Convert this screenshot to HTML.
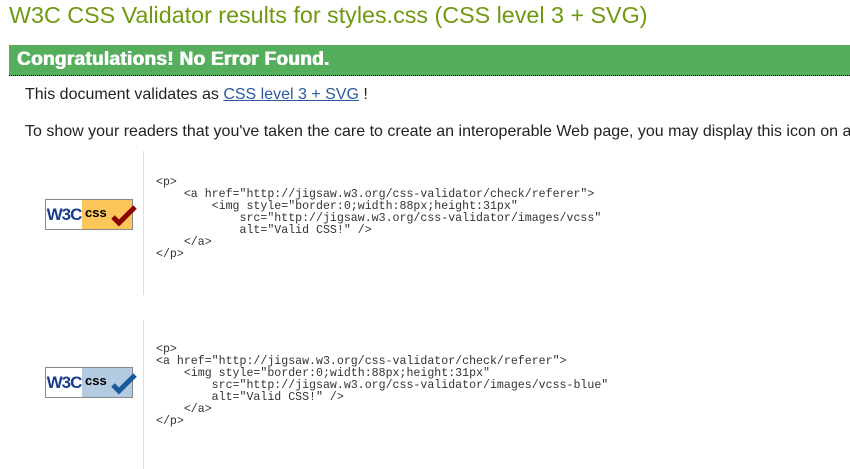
<!DOCTYPE html>
<html><head><meta charset="utf-8"><style>
body{margin:0;width:850px;height:469px;overflow:hidden;background:#fff;font-family:"Liberation Sans",Arial,sans-serif;position:relative}
.a{position:absolute;white-space:nowrap}
h1{position:absolute;left:9px;top:0;margin:0;font-weight:normal;font-size:23.3px;color:#6e9a0f;line-height:30px;white-space:nowrap}
.bar{position:absolute;left:9px;top:45px;width:833px;height:30px;background:#54ae5b;border-bottom:1px dotted #000;color:#fff;font-weight:bold;font-size:19px;line-height:30px;padding-left:8px;white-space:nowrap;overflow:hidden;text-shadow:0.6px 0 0 #fff,-0.3px 0 0 #fff;letter-spacing:0.3px}
.t{font-size:16px;color:#222;left:25px;width:825px;overflow:hidden}
.t a{color:#2a5aa0;text-decoration:underline}
.vl{position:absolute;left:143px;width:1px;background:#ddd}
pre{position:absolute;left:156px;margin:0;font-family:"Liberation Mono","Courier New",monospace;font-size:11.6px;line-height:12px;color:#333}
.badge{position:absolute;left:45px;width:86px;height:29px;border:1px solid #888;background:#fff;overflow:visible}
</style></head><body>
<h1>W3C CSS Validator results for styles.css (CSS level 3 + SVG)</h1>
<div class="bar">Congratulations! No Error Found.</div>
<div class="a t" style="top:86px">This document validates as <a>CSS level 3 + SVG</a> !</div>
<div class="a t" style="top:123px">To show your readers that you've taken the care to create an interoperable Web page, you may display this icon on any page that validates.</div>
<div class="vl" style="top:151px;height:144px"></div>
<div class="vl" style="top:320px;height:149px"></div>
<div class="badge" style="top:199px">
 <div style="position:absolute;left:0;top:0;width:36px;height:29px;background:#fff;font:bold 17px/29px 'Liberation Sans Narrow','Liberation Sans',sans-serif;color:#1a3e8c;text-align:center;letter-spacing:-1px">W3C</div>
 <div style="position:absolute;left:36px;top:0;width:50px;height:29px;background:#fdc65a;font:bold 13px/26px 'Liberation Sans',sans-serif;color:#000;padding-left:3px;box-sizing:border-box">css</div>
 <svg style="position:absolute;left:64px;top:3px" width="28" height="26" viewBox="0 0 28 26"><path d="M3 14 L9 20 L25 4" stroke="#8b0000" stroke-width="5" fill="none"/></svg>
</div>
<div class="badge" style="top:367px">
 <div style="position:absolute;left:0;top:0;width:36px;height:29px;background:#fff;font:bold 17px/29px 'Liberation Sans Narrow','Liberation Sans',sans-serif;color:#1a3e8c;text-align:center;letter-spacing:-1px">W3C</div>
 <div style="position:absolute;left:36px;top:0;width:50px;height:29px;background:#b3cbe0;font:bold 13px/26px 'Liberation Sans',sans-serif;color:#000;padding-left:3px;box-sizing:border-box">css</div>
 <svg style="position:absolute;left:64px;top:3px" width="28" height="26" viewBox="0 0 28 26"><path d="M3 14 L9 20 L25 4" stroke="#1a5a9c" stroke-width="5" fill="none"/></svg>
</div>
<pre style="top:177px">&lt;p&gt;
    &lt;a href="http://jigsaw.w3.org/css-validator/check/referer"&gt;
        &lt;img style="border:0;width:88px;height:31px"
            src="http://jigsaw.w3.org/css-validator/images/vcss"
            alt="Valid CSS!" /&gt;
    &lt;/a&gt;
&lt;/p&gt;</pre>
<pre style="top:344px">&lt;p&gt;
&lt;a href="http://jigsaw.w3.org/css-validator/check/referer"&gt;
    &lt;img style="border:0;width:88px;height:31px"
        src="http://jigsaw.w3.org/css-validator/images/vcss-blue"
        alt="Valid CSS!" /&gt;
    &lt;/a&gt;
&lt;/p&gt;</pre>
</body></html>
